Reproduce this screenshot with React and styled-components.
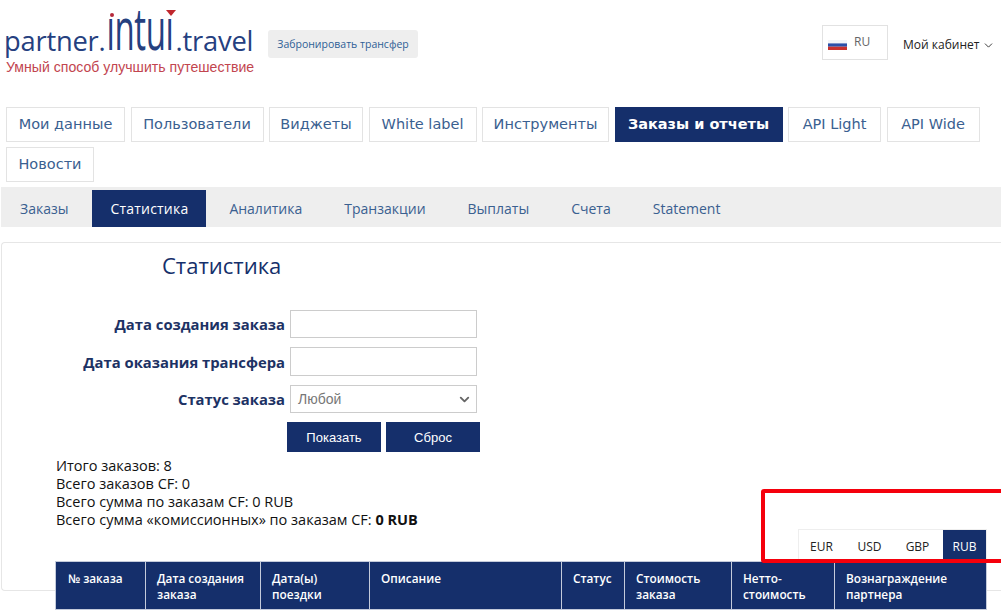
import React from "react";
import styled, { createGlobalStyle } from "styled-components";
import { FiChevronDown } from "react-icons/fi";

const GlobalStyle = createGlobalStyle`
    html, body {
        margin: 0;
        padding: 0;
        background: #fff;
        overflow: hidden;
    }
    body {
        font-family: "Open Sans", "Liberation Sans", sans-serif;
        color: #111;
    }
    * {
        box-sizing: border-box;
    }
`;

const navy = "#152f6b";
const linkBlue = "#3a6090";

const mainMenu = [
    { title: "Мои данные", width: 119 },
    { title: "Пользователи", width: 133 },
    { title: "Виджеты", width: 94 },
    { title: "White label", width: 108 },
    { title: "Инструменты", width: 127 },
    { title: "Заказы и отчеты", width: 168 },
    { title: "API Light", width: 93 },
    { title: "API Wide", width: 93 },
    { title: "Новости", width: 88 },
];
const subMenu = ["Заказы", "Статистика", "Аналитика", "Транзакции", "Выплаты", "Счета", "Statement"];
const currencies = ["EUR", "USD", "GBP", "RUB"];
const columns = [
    { title: "№ заказа", width: 90 },
    { title: "Дата создания заказа", width: 115 },
    { title: "Дата(ы) поездки", width: 109 },
    { title: "Описание", width: 192 },
    { title: "Статус", width: 63 },
    { title: "Стоимость заказа", width: 107 },
    { title: "Нетто-стоимость", width: 103 },
    { title: "Вознаграждение партнера", width: 152 },
];

function App() {
    return (
        <Page>
            <GlobalStyle />
            <Header>
                <Logo>
                    <LogoLine>
                        partner.
                        <LogoMark>
                            <LogoWord>ıntuı</LogoWord>
                            <LogoDot />
                            <LogoArrow />
                        </LogoMark>
                        .travel
                    </LogoLine>
                    <Tagline>Умный способ улучшить путешествие</Tagline>
                </Logo>
                <BookButton>Забронировать трансфер</BookButton>
                <HeaderRight>
                    <LangBox>
                        <svg width="19" height="10" viewBox="0 0 19 10">
                            <rect width="19" height="3.4" y="0" fill="#f2f3f7" />
                            <rect width="19" height="3.3" y="3.4" fill="#2b4fa8" />
                            <rect width="19" height="3.3" y="6.7" fill="#c9302c" />
                        </svg>
                        <LangText>RU</LangText>
                    </LangBox>
                    <Cabinet>
                        Мой кабинет
                        <FiChevronDown size={13} strokeWidth={1.6} />
                    </Cabinet>
                </HeaderRight>
            </Header>

            <MainMenu>
                {mainMenu.map((item) => (
                    <MainItem key={item.title} $width={item.width} $active={item.title === "Заказы и отчеты"}>
                        {item.title}
                    </MainItem>
                ))}
            </MainMenu>

            <SubMenu>
                {subMenu.map((item) => (
                    <SubItem key={item} $active={item === "Статистика"}>{item}</SubItem>
                ))}
            </SubMenu>

            <Panel>
                <Title>Статистика</Title>
                <Form>
                    <FieldLabel>Дата создания заказа</FieldLabel>
                    <TextInput />
                    <FieldLabel>Дата оказания трансфера</FieldLabel>
                    <TextInput />
                    <FieldLabel>Статус заказа</FieldLabel>
                    <SelectBox>
                        Любой
                        <FiChevronDown size={15} strokeWidth={3} color="#666" />
                    </SelectBox>
                </Form>
                <Buttons>
                    <ActionButton>Показать</ActionButton>
                    <ActionButton>Сброс</ActionButton>
                </Buttons>
                <Totals>
                    <div>Итого заказов: 8</div>
                    <div>Всего заказов CF: 0</div>
                    <div>Всего сумма по заказам CF: 0 RUB</div>
                    <div>Всего сумма «комиссионных» по заказам CF: <b>0 RUB</b></div>
                </Totals>
                <CurrencyRow>
                    <Currencies>
                        {currencies.map((item) => (
                            <Currency key={item} $active={item === "RUB"}>{item}</Currency>
                        ))}
                    </Currencies>
                </CurrencyRow>
                <Table>
                    <thead>
                        <tr>
                            {columns.map((col) => (
                                <HeadCell key={col.title} style={{ width: col.width }}>{col.title}</HeadCell>
                            ))}
                        </tr>
                    </thead>
                </Table>
                <Highlight />
            </Panel>
        </Page>
    );
}

const Page = styled.div`
    width: 1001px;
    height: 612px;
    overflow: hidden;
`;

const Header = styled.header`
    display: flex;
    align-items: flex-start;
    height: 107px;
    padding-left: 5px;
`;

const Logo = styled.div`
    width: 263px;
    padding-top: 21px;
    flex-shrink: 0;
`;

const LogoLine = styled.div`
    display: flex;
    align-items: flex-end;
    height: 38px;
    margin-left: -1px;
    font-family: "Open Sans", sans-serif;
    font-size: 27.3px;
    line-height: 36px;
    letter-spacing: -0.2px;
    color: #25407f;
    white-space: nowrap;
`;

const LogoMark = styled.span`
    position: relative;
    display: inline-block;
    width: 70px;
    height: 36px;
`;

const LogoWord = styled.span`
    position: absolute;
    left: 1px;
    bottom: 10px;
    font-size: 33px;
    line-height: 20px;
    font-weight: 400;
    letter-spacing: -0.4px;
    transform: scaleY(1.8);
    transform-origin: left 22.8px;
`;

const LogoDot = styled.span`
    position: absolute;
    left: 4px;
    top: -10px;
    width: 4px;
    height: 4px;
    border-radius: 50%;
    background: #b5293a;
`;

const LogoArrow = styled.span`
    position: absolute;
    left: 60px;
    top: -13px;
    border-left: 5px solid transparent;
    border-right: 5px solid transparent;
    border-top: 6px solid #c0272d;
`;

const Tagline = styled.div`
    margin: 1px 0 0 1px;
    font-family: "Liberation Sans", Arial, sans-serif;
    font-size: 14.1px;
    line-height: 15px;
    color: #c2454f;
    white-space: nowrap;
`;

const BookButton = styled.button`
    margin-top: 30px;
    width: 150px;
    height: 28px;
    padding: 0;
    border: none;
    border-radius: 3px;
    background: #eee;
    color: #2e5f96;
    font-family: "Open Sans", sans-serif;
    font-size: 10.5px;
`;

const HeaderRight = styled.div`
    display: flex;
    align-items: flex-start;
    margin-left: 404px;
    margin-top: 25px;
`;

const LangBox = styled.div`
    display: flex;
    align-items: flex-start;
    gap: 7px;
    width: 66px;
    height: 35px;
    padding: 14px 0 0 5px;
    border: 1px solid #e2e2e2;
`;

const LangText = styled.span`
    margin-top: -6px;
    font-size: 12px;
    line-height: 16px;
    color: #666;
`;

const Cabinet = styled.div`
    display: flex;
    align-items: center;
    gap: 3px;
    margin: 11px 0 0 15px;
    font-size: 12px;
    line-height: 18px;
    color: #222;
    white-space: nowrap;
`;

const MainMenu = styled.nav`
    display: flex;
    flex-wrap: wrap;
    align-content: flex-start;
    gap: 5px 5.5px;
    padding-left: 6px;
    height: 80px;
`;

const MainItem = styled.div`
    width: ${(props) => props.$width}px;
    height: 35px;
    border: 1px solid ${(props) => (props.$active ? navy : "#e3e3e3")};
    background: ${(props) => (props.$active ? navy : "#fff")};
    color: ${(props) => (props.$active ? "#fff" : linkBlue)};
    font-family: "DejaVu Sans", sans-serif;
    font-size: 14.5px;
    font-weight: ${(props) => (props.$active ? 700 : 400)};
    line-height: 33px;
    text-align: center;
    white-space: nowrap;
`;

const SubMenu = styled.nav`
    display: flex;
    align-items: flex-end;
    height: 40px;
    margin-left: 1px;
    background: #eee;
`;

const SubItem = styled.div`
    height: 37px;
    padding: 0 ${(props) => (props.$active ? "18px" : "21px")};
    margin: 0 ${(props) => (props.$active ? "2px" : "0")};
    background: ${(props) => (props.$active ? navy : "transparent")};
    color: ${(props) => (props.$active ? "#fff" : linkBlue)};
    font-size: 14px;
    letter-spacing: ${(props) => (props.$active ? "0.2px" : "0")};
    line-height: 38px;

    &:first-child {
        padding: 0 22px 0 19px;
    }
`;

const Panel = styled.section`
    position: relative;
    height: 349px;
    margin: 15px 0 0 1px;
    border: 1px solid #e6e6e6;
    border-right: none;
    border-radius: 4px 0 0 4px;
`;

const Title = styled.h1`
    margin: 0;
    padding: 7px 0 0 160px;
    height: 67px;
    font-size: 22px;
    font-weight: 400;
    line-height: 30px;
    color: ${navy};
`;

const Form = styled.div`
    display: grid;
    grid-template-columns: 283px 187px;
    grid-template-rows: 28px 29px 28px;
    row-gap: 9px;
    column-gap: 5px;
    align-items: center;
`;

const FieldLabel = styled.label`
    text-align: right;
    font-size: 14.8px;
    font-weight: 700;
    color: #1d3264;
    white-space: nowrap;
`;

const TextInput = styled.input`
    width: 187px;
    height: 100%;
    border: 1px solid #ccc;
    background: #fff;
`;

const SelectBox = styled.div`
    display: flex;
    align-items: center;
    justify-content: space-between;
    height: 28px;
    padding: 0 4px 0 7px;
    border: 1px solid #ccc;
    font-family: "Liberation Sans", Arial, sans-serif;
    font-size: 14px;
    color: #777;
`;

const Buttons = styled.div`
    display: flex;
    gap: 5px;
    margin: 9px 0 0 285px;
`;

const ActionButton = styled.button`
    width: 94px;
    height: 30px;
    padding: 0;
    border: none;
    background: ${navy};
    color: #fff;
    font-family: "Liberation Sans", Arial, sans-serif;
    font-size: 13px;
`;

const Totals = styled.div`
    margin: 5px 0 0 54px;
    font-size: 14.5px;
    line-height: 18px;
    color: #111;
    white-space: nowrap;
`;

const CurrencyRow = styled.div`
    display: flex;
    justify-content: flex-end;
    height: 32px;
    padding-right: 14px;
`;

const Currencies = styled.div`
    display: flex;
    height: 32px;
    border: 1px solid #eee;
    border-bottom: none;
`;

const Currency = styled.div`
    width: ${(props) => (props.$active ? "43px" : "48px")};
    padding-right: ${(props) => (props.$active ? "0" : "3px")};
    background: ${(props) => (props.$active ? navy : "#fff")};
    color: ${(props) => (props.$active ? "#fff" : "#222")};
    font-size: 12px;
    line-height: 33px;
    text-align: center;
`;

const Table = styled.table`
    width: 931px;
    margin-left: 53px;
    border-collapse: collapse;
    table-layout: fixed;
`;

const HeadCell = styled.th`
    height: 48px;
    padding: 8px 11px 3px;
    border: 1px solid #c4cbdb;
    background: ${navy};
    color: #fff;
    font-size: 11.8px;
    font-weight: 600;
    line-height: 16px;
    text-align: left;
    vertical-align: top;

    &:first-child {
        padding-left: 12px;
    }
`;

const Highlight = styled.div`
    position: absolute;
    left: 759px;
    top: 246px;
    width: 250px;
    height: 74px;
    border: 4px solid #f5000c;
    border-radius: 3px;
`;

export default App;
